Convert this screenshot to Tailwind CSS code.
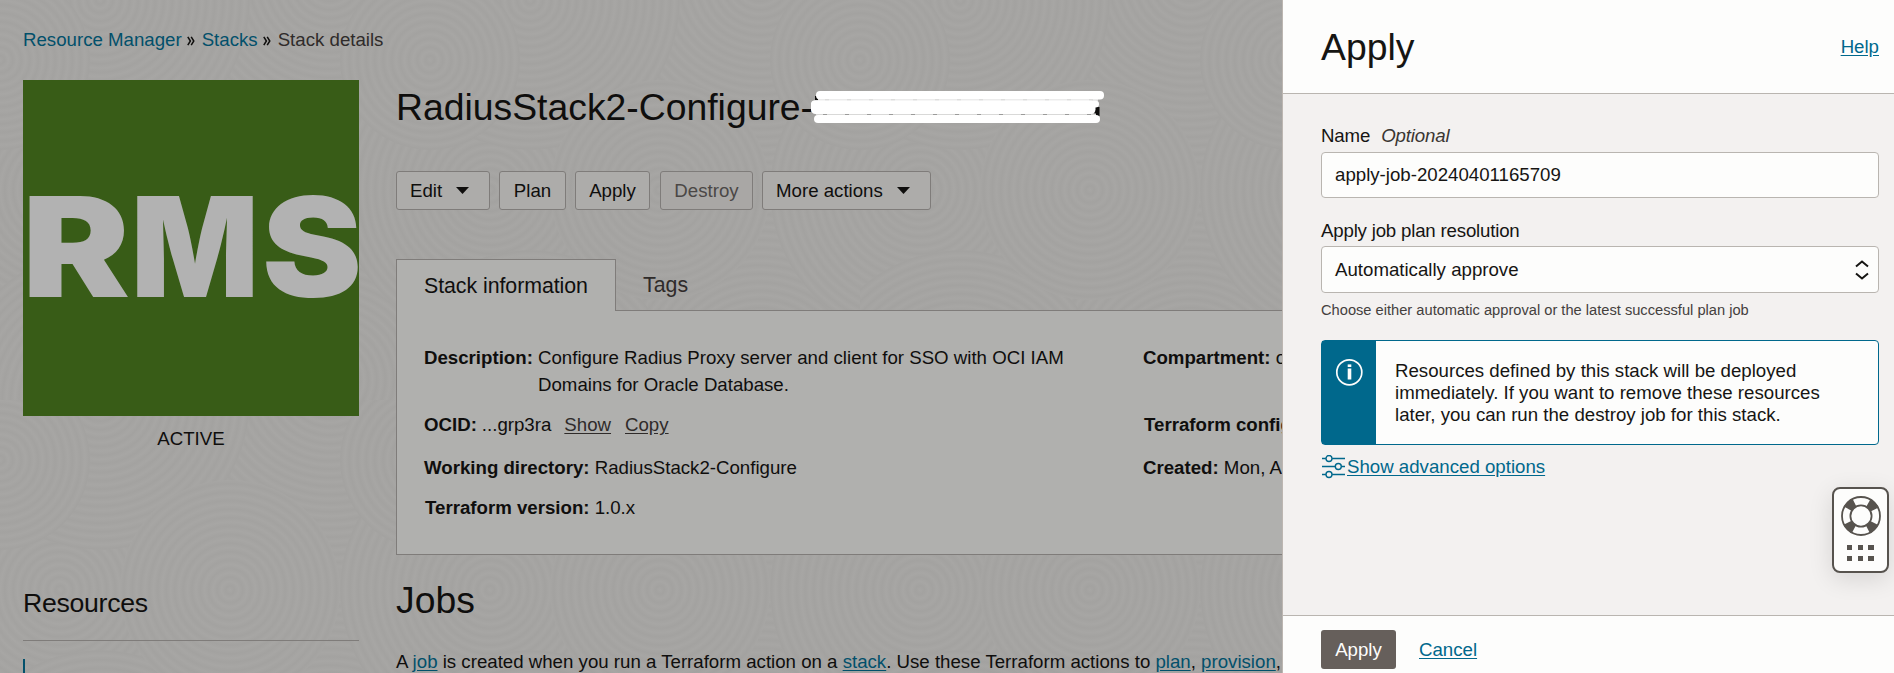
<!DOCTYPE html>
<html lang="en">
<head>
<meta charset="utf-8">
<title>Stack details</title>
<script src="https://cdn.jsdelivr.net/npm/@tailwindcss/browser@4"></script>
</head>
<body class="relative flex h-[673px] w-[1894px] overflow-hidden bg-[#a5a4a2] font-['Liberation_Sans',Arial,sans-serif] text-[18.67px] leading-[27px] text-[#0f0e0d]">
<!-- ripple texture -->
<svg class="absolute inset-0" width="1282" height="673">
  <defs>
    <radialGradient id="rg" gradientUnits="userSpaceOnUse" cx="0" cy="0" r="8.500" spreadMethod="repeat">
      <stop offset="0" stop-color="#a7a6a4"/><stop offset=".5" stop-color="#a3a2a0"/><stop offset="1" stop-color="#a7a6a4"/>
    </radialGradient>
    <pattern id="rp" width="430" height="400" patternUnits="userSpaceOnUse">
      <rect width="430" height="400" fill="#a5a4a2"/>
      <g fill="url(#rg)">
        <circle r="190" transform="translate(330 -20)"/>
        <circle r="190" transform="translate(330 380)"/>
        <circle r="190" transform="translate(-100 380)"/>
        <circle r="150" transform="translate(60 190)"/>
        <circle r="150" transform="translate(490 190)"/>
        <circle r="150" transform="translate(100 0)"/>
        <circle r="150" transform="translate(100 400)"/>
        <circle r="110" transform="translate(230 190)"/>
        <circle r="90" transform="translate(430 60)"/>
        <circle r="90" transform="translate(0 60)"/>
      </g>
    </pattern>
  </defs>
  <rect width="1282" height="673" fill="url(#rp)"/>
</svg>

<main class="relative h-[673px] w-[1282px] shrink-0 overflow-hidden pl-[23px] pt-[26px]">
  <nav class="flex h-[27px] items-center whitespace-nowrap">
    <a class="text-[#02506b]">Resource Manager</a>
    <svg class="ml-[5px] mr-[7px] mt-[3px]" width="8" height="10" fill="none" stroke="#0f0e0d" stroke-width="1.5"><path d="M.8.8 3.400 5 .8 9.200M4.200.8 6.800 5 4.200 9.200"/></svg>
    <a class="text-[#02506b]">Stacks</a>
    <svg class="ml-[5px] mr-[7px] mt-[3px]" width="8" height="10" fill="none" stroke="#0f0e0d" stroke-width="1.5"><path d="M.8.8 3.400 5 .8 9.200M4.200.8 6.800 5 4.200 9.200"/></svg>
    <span class="text-[#2f2b2a]">Stack details</span>
  </nav>

  <div class="mt-[27px] flex">
    <aside class="w-[336px] shrink-0">
      <svg class="block bg-[#385c17]" width="336" height="336" fill="#b2b2b2" font-family="Inter" font-weight="900" font-size="139">
        <text x="-1" y="217" textLength="108" lengthAdjust="spacingAndGlyphs">R</text>
        <text x="108" y="217" textLength="128" lengthAdjust="spacingAndGlyphs">M</text>
        <text x="239" y="217" textLength="100" lengthAdjust="spacingAndGlyphs">S</text>
      </svg>
      <div class="mt-[9px] text-center">ACTIVE</div>
      <h2 class="mt-[132px] h-[52px] text-[26.67px] leading-[39px] tracking-[-0.3px]">Resources</h2>
      <div class="mt-[4px] h-px bg-[#7f7c7a]"></div>
      <div class="mt-[18px] h-[30px] w-[2px] bg-[#02506b]"></div>
    </aside>

    <section class="ml-[37px] w-[1100px] shrink-0">
      <div class="flex h-[54px] items-center whitespace-nowrap">
        <h1 class="text-[37.33px] leading-[54px]">RadiusStack2-Configure-</h1>
        <!-- redacted suffix -->
        <svg class="-ml-[2px] block" width="296" height="54">
          <path d="M4 16h5v4H4zM283 27h5.500v9h-5z" fill="#0f0e0d"/>
          <path d="M7 20h280M5 34.500h280" stroke="#d9d9d8" stroke-width="2"/>
          <path d="M14 20h268M12 34.500h268" stroke="#9b9b9a" stroke-width="1" stroke-dasharray="4 18"/>
          <g fill="#fff"><rect x="5" y="11" width="288" height="8.500" rx="4"/><rect x="0" y="20.500" width="288" height="7" rx="3.500"/><rect x="0" y="20.500" width="284.500" height="13.500" rx="4.500"/><rect x="3" y="35" width="286" height="8" rx="4"/></g>
        </svg>
      </div>

      <div class="mt-[37px] flex h-[39px] whitespace-nowrap">
        <button class="flex h-[39px] w-[94px] items-center gap-[14px] rounded-[3px] border border-[#7f7c7a] bg-[#adacaa] pl-[13px]">Edit<svg width="13" height="7"><path d="M0 0h13L6.500 7z" fill="#0f0e0d"/></svg></button>
        <button class="ml-[9px] h-[39px] w-[67px] rounded-[3px] border border-[#7f7c7a] bg-[#adacaa]">Plan</button>
        <button class="ml-[9px] h-[39px] w-[75px] rounded-[3px] border border-[#7f7c7a] bg-[#adacaa]">Apply</button>
        <button class="ml-[10px] h-[39px] w-[93px] rounded-[3px] border border-[#7f7c7a] bg-[#a9a7a5] text-[#4b4746]">Destroy</button>
        <button class="ml-[9px] flex h-[39px] w-[169px] items-center gap-[14px] rounded-[3px] border border-[#7f7c7a] bg-[#adacaa] pl-[13px]">More actions<svg width="13" height="7"><path d="M0 0h13L6.500 7z" fill="#0f0e0d"/></svg></button>
      </div>

      <div class="relative z-10 mt-[49px] flex h-[52px] text-[21.33px]">
        <div class="flex h-[52px] w-[220px] items-center border border-b-0 border-[#7f7c7a] bg-[#b0b0ae] pl-[27px] pt-[2px] tracking-[-0.05px]">Stack information</div>
        <div class="ml-[27px] flex items-center text-[#2f2b2a]">Tags</div>
      </div>
      <div class="-mt-px flex h-[245px] border border-[#7f7c7a] bg-[#b0b0ae] pl-[27px] pt-[33px] whitespace-nowrap">
        <div class="w-[719px] shrink-0">
          <div class="flex h-[67px]"><b class="w-[114px]">Description:</b><span>Configure Radius Proxy server and client for SSO with OCI IAM<br>Domains for Oracle Database.</span></div>
          <div class="flex h-[43px]"><b class="mr-[5px]">OCID:</b>...grp3ra<a class="ml-[13px] text-[#2f2b2a] underline underline-offset-2">Show</a><a class="ml-[14px] text-[#2f2b2a] underline underline-offset-2">Copy</a></div>
          <div class="h-[40px]"><b>Working directory:</b> RadiusStack2-Configure</div>
          <div class="pl-px"><b>Terraform version:</b> 1.0.x</div>
        </div>
        <div>
          <div class="h-[67px]"><b>Compartment:</b> oci</div>
          <div class="h-[43px] pl-px"><b>Terraform configuration:</b></div>
          <div class="h-[40px]"><b>Created:</b> Mon, Apr 1</div>
        </div>
      </div>

      <h2 class="mt-[18px] text-[37.33px] leading-[54px]">Jobs</h2>
      <p class="mt-[21px] whitespace-nowrap">A <a class="text-[#02506b] underline underline-offset-2">job</a> is created when you run a Terraform action on a <a class="text-[#02506b] underline underline-offset-2">stack</a>. Use these Terraform actions to <a class="text-[#02506b] underline underline-offset-2">plan</a>, <a class="text-[#02506b] underline underline-offset-2">provision</a>,</p>
    </section>
  </div>
</main>

<aside class="relative flex h-[673px] w-[612px] shrink-0 flex-col border-l border-[#bcb6b1] bg-[#f3f1f0] text-[#161513]">
  <header class="flex h-[94px] items-center justify-between border-b border-[#b9b5b0] bg-[#fdfdfc] pl-[38px] pr-[15px]">
    <h2 class="text-[37.33px] leading-[54px]">Apply</h2>
    <a class="text-[#00688c] underline underline-offset-2">Help</a>
  </header>
  <div class="flex-1 pl-[38px] pr-[15px] pt-[28px] whitespace-nowrap">
    <label class="block h-[30px] tracking-[-0.15px]">Name<i class="ml-[11px] text-[#3a3632]">Optional</i></label>
    <div class="flex h-[46px] items-center rounded-[4px] border border-[#b9b5b0] bg-[#fdfdfc] pb-px pl-[13px]">apply-job-20240401165709</div>
    <label class="mt-[19px] block h-[29px] tracking-[-0.19px]">Apply job plan resolution</label>
    <div class="flex h-[47px] items-center justify-between rounded-[4px] border border-[#b9b5b0] bg-[#fdfdfc] pl-[13px] pr-[9px]">Automatically approve
      <svg width="14" height="20" fill="none" stroke="#161513" stroke-width="2"><path d="M1 6.500 7 1.500l6 5M1 13.500l6 5 6-5"/></svg>
    </div>
    <p class="mt-[6px] h-[24px] text-[14.67px] leading-[22px] text-[#44403d]">Choose either automatic approval or the latest successful plan job</p>
    <div class="mt-[17px] flex h-[105px] rounded-[4px] border border-[#00688c] bg-[#fdfdfc]">
      <div class="w-[54px] shrink-0 bg-[#00688c] pl-[13px] pt-[17px]">
        <svg width="28" height="28" fill="none" stroke="#fdfdfc"><circle cx="14.300" cy="14.300" r="12.500" stroke-width="1.700"/><path d="M14.500 10.500V21.500" stroke-width="3.600"/><path d="M12.700 7.700h3.600" stroke-width="2.600"/></svg>
      </div>
      <p class="pl-[19px] pt-[19px] leading-[22px]">Resources defined by this stack will be deployed<br>immediately. If you want to remove these resources<br>later, you can run the destroy job for this stack.</p>
    </div>
    <div class="mt-[8px] flex h-[27px] items-center text-[#00688c]">
      <svg class="mr-[2px] shrink-0" width="24" height="24" fill="none" stroke="#00688c" stroke-width="1.400"><path d="M1 3.500h3.900M11.100 3.500H24M1 11.500h13.200M20.400 11.500H24M1 19.500h3.900M11.100 19.500H24"/><circle cx="8" cy="3.500" r="3"/><circle cx="17.300" cy="11.500" r="3"/><circle cx="8" cy="19.500" r="3"/></svg>
      <a class="underline underline-offset-2">Show advanced options</a>
    </div>
  </div>
  <footer class="flex h-[58px] items-start border-t border-[#b9b5b0] bg-[#fdfdfc] pl-[38px] pt-[14px]">
    <button class="h-[39px] w-[75px] rounded-[3px] bg-[#665f5b] text-[#fdfdfc]">Apply</button>
    <a class="ml-[23px] mt-[6px] text-[#00688c] underline underline-offset-2">Cancel</a>
  </footer>
  <!-- floating support widget -->
  <div class="absolute left-[549px] top-[487px] flex h-[86px] w-[57px] flex-col items-center rounded-[8px] border-2 border-[#57534e] bg-[#fdfdfc] pt-[7px] shadow-[0_6px_24px_rgba(0,0,0,0.12)]">
    <svg width="40" height="40" fill="none" stroke="#57534e"><circle cx="20" cy="20" r="15" stroke-width="9" stroke-dasharray="9 14.562" stroke-dashoffset="-7.281"/><circle cx="20" cy="20" r="19" stroke-width="1.800"/><circle cx="20" cy="20" r="10.600" stroke-width="1.800"/></svg>
    <svg class="mt-[9px]" width="27" height="16" fill="#57534e"><path d="M0 0h5v5H0zM11 0h5v5h-5zM21 0h6v5h-6zM0 11h5v5H0zM11 11h5v5h-5zM21 11h6v5h-6z"/></svg>
  </div>
</aside>
</body>
</html>
